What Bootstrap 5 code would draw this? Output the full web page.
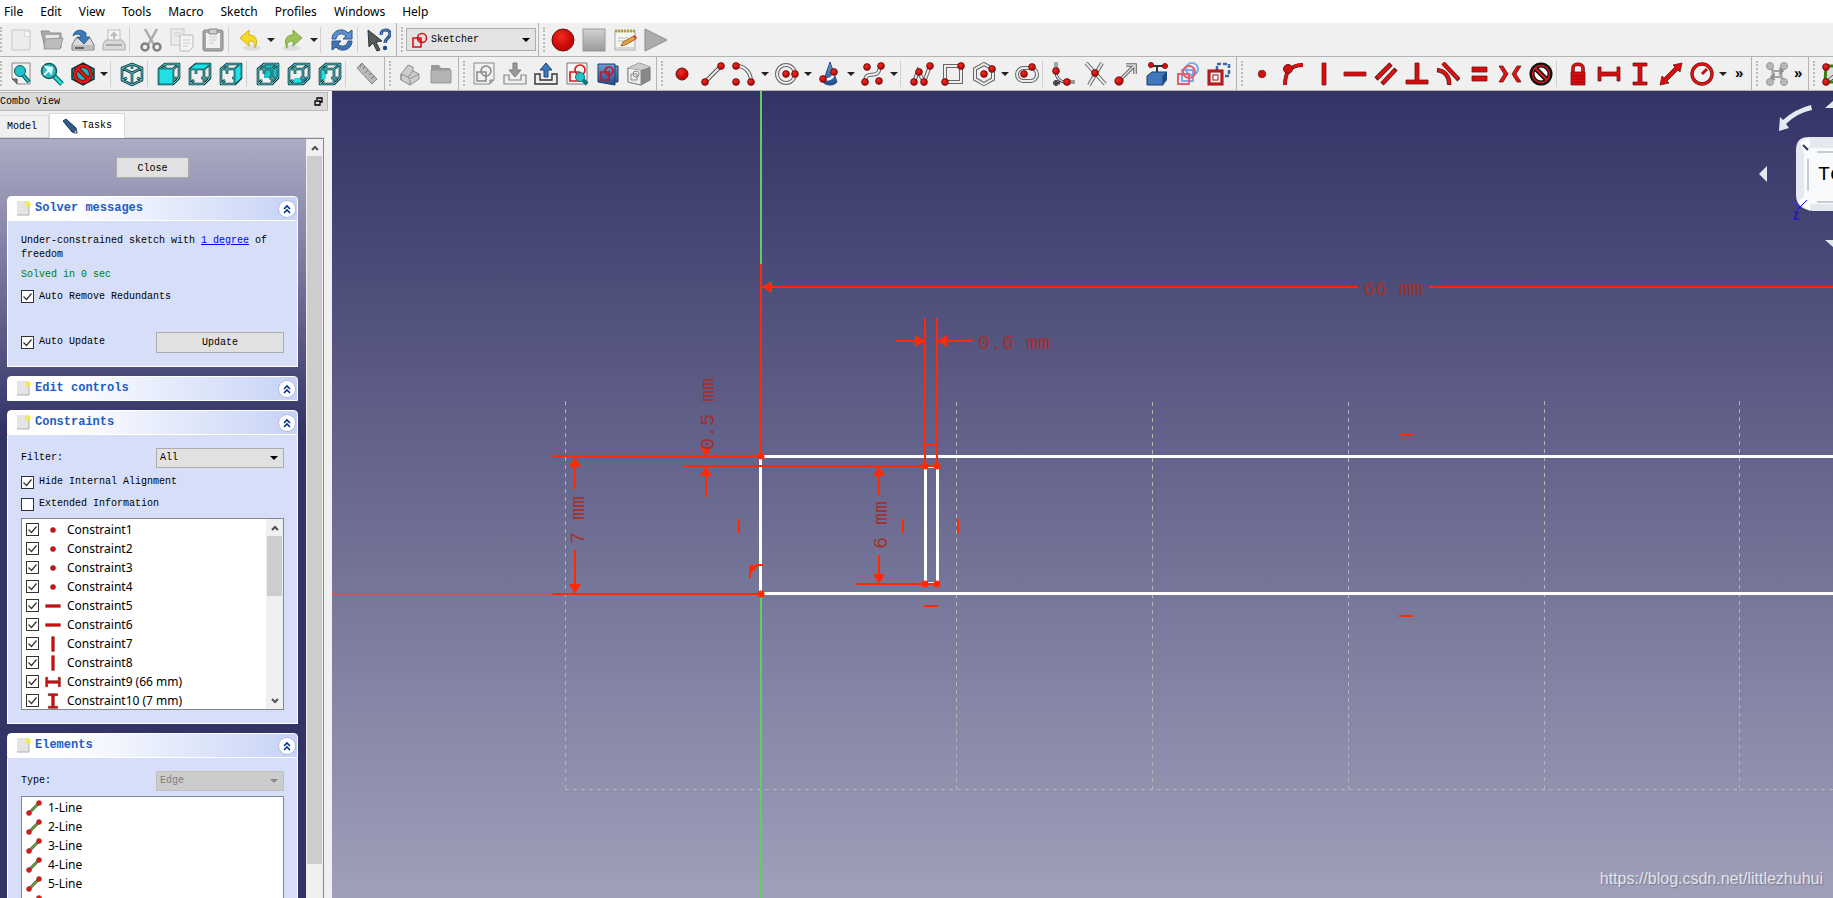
<!DOCTYPE html>
<html lang="en">
<head>
<meta charset="utf-8">
<meta name="viewport" content="width=device-width, initial-scale=1">
<title>Sketcher</title>
<link rel="stylesheet" href="https://cdn.jsdelivr.net/npm/bootstrap@5.3.0/dist/css/bootstrap.min.css">
<script src="https://cdn.jsdelivr.net/npm/bootstrap@5.3.0/dist/js/bootstrap.bundle.min.js"></script>
<style>
:root { --mono: "Liberation Mono", monospace; --ui: "Noto Sans", sans-serif; }
body { font: 12px/19px var(--ui); color: #000; background: #f0f0f0; }
button { color: inherit; }

.menubar { background: #fff; height: 23px; padding-left: 4px; gap: 17px; }
.menubar a { color: #000; text-decoration: none; line-height: 23px; }

.toolrow { height: 34px; border-bottom: 1px solid #b4b4b4; }
.toolgroup { flex: none; border-right: 1px solid #b4b4b4; padding: 0 2px 0 9px; position: relative; }
.toolgroup:first-child { padding-left: 5px; }
.toolgroup.open { border-right: 0; }
.toolgroup::before { content: ""; position: absolute; left: 4px; top: 4px; bottom: 4px; border-left: 2px dotted #bbb; }
.toolgroup:first-child::before { left: 0; }
.tb { flex: none; width: 31px; height: 33px; padding: 0; border: 0; background: none; display: flex; align-items: center; justify-content: center; }
.tb svg { width: 24px; height: 24px; }
.arr { flex: none; width: 12px; height: 33px; padding: 0; border: 0; background: none; display: flex; align-items: center; justify-content: center; }
.arr::after { content: ""; border: 4px solid transparent; border-top-color: #222; border-bottom: 0; }
.tsep { flex: none; width: 6px; height: 26px; border-left: 1px solid #d0d0d0; }
.more { border: 0; background: none; padding: 0 0 2px 6px; width: 20px; font: bold 15px/28px "Liberation Sans", sans-serif; text-align: left; }
.more.tight { width: 14px; padding-left: 2px; }
.bench { width: 130px; height: 23px; padding-left: 5px; background: #e3e3e3; border: 1px solid #adadad; }
.bench svg { width: 16px; height: 16px; flex: none; }
.toolgroup.macro { padding-left: 8px; }

select { appearance: none; font: 10px/14px var(--mono); color: #000; border-radius: 0; padding: 0 3px; background: #e1e1e1 url("data:image/svg+xml,%3Csvg xmlns='http://www.w3.org/2000/svg' width='8' height='4'%3E%3Cpath d='M0 0h8L4 4z'/%3E%3C/svg%3E") no-repeat right 5px center; border: 1px solid #adadad; }
.bench select { border: 0; flex: 1; min-width: 0; background-color: transparent; padding-left: 3px; }
.combo { width: 128px; height: 20px; }
.combo:disabled { background-color: #ccc; background-image: url("data:image/svg+xml,%3Csvg xmlns='http://www.w3.org/2000/svg' width='8' height='4'%3E%3Cpath d='M0 0h8L4 4z' fill='%23888'/%3E%3C/svg%3E"); border-color: #bfbfbf; color: #808080; opacity: 1; }

.dock { width: 332px; flex: none; padding-right: 4px; }
.dock, .push { font: 10px/14px var(--mono); }
.docktitle { height: 19px; margin-top: 1px; background: #dadada; border: 1px solid #b9b9b9; border-left: 0; padding-right: 4px; }
.docktitle button, .up, .down { border: 0; background: none; padding: 0; display: flex; }
.tabs { height: 27px; padding-top: 2px; border-bottom: 1px solid #d9d9d9; margin-right: 3px; }
.tabs button { border: 1px solid #d9d9d9; border-bottom: 0; background: #f0f0f0; font: 10px/14px var(--mono); }
.tabs .idle { width: 49px; height: 22px; border-left: 0; padding: 0 0 0 7px; text-align: left; }
.tabs .live { width: 76px; height: 25px; background: #fff; margin-bottom: -1px; padding: 0; gap: 4px; display: flex; align-items: center; justify-content: center; }
.taskframe { border: 1px solid #828790; border-left: 0; border-bottom: 0; margin-right: 4px; }
.tasks { width: 306px; padding: 18px 8px 0 7px; background: linear-gradient(#acacc4, #8a88ab 90px, #333366 290px); }
.push { background: #e1e1e1; border: 1px solid #adadad; height: 21px; padding: 2px 0 0; }
.closebtn { width: 73px; margin: 0 auto 18px; display: block; }

.vbar { width: 17px; background: #f0f0f0; flex: none; }
.vbar .up, .vbar .down { height: 17px; flex: none; width: 100%; align-items: center; justify-content: center; }
.vbar .thumb { background: #cdcdcd; margin: 0 1px; }
.vbar .long { height: 708px; }
.vbar .short { height: 60px; }

.group { margin-bottom: 9px; }
.group header { height: 25px; background: linear-gradient(90deg, #fff 20%, #c6d3f7); border: 1px solid #fff; border-radius: 4px 4px 0 0; padding: 0 2px 0 9px; }
.group h2 { font: bold 12px/23px var(--mono); color: #215dc6; margin: 0; flex: 1; padding-left: 4px; }
.fold { width: 16px; height: 16px; border: 0; padding: 0; border-radius: 50%; background: #fff; box-shadow: 0 0 0 1px #b3bcd8; display: flex; align-items: center; justify-content: center; }
.panelbody { background: #d6dff7; border: 1px solid #fff; border-top: 0; padding: 13px; }
.panelbody a { color: #00f; }
.solved { color: #008000; padding: 6px 0 8px; }
.spaced { margin-bottom: 19px; }
.filter { margin-bottom: 3px; }
.kind { margin-bottom: 5px; }
.tick { appearance: none; flex: none; width: 13px; height: 13px; border: 1px solid #333; background: #fff; margin: 0; }
.tick:checked { background: #fff url("data:image/svg+xml,%3Csvg xmlns='http://www.w3.org/2000/svg' width='11' height='11'%3E%3Cpath d='M1.500 5.500l3 3 5-6' fill='none' stroke='%23333' stroke-width='1.200'/%3E%3C/svg%3E") center no-repeat; }
.check { gap: 5px; height: 22px; }
.listbox { background: #fff; border: 1px solid #828790; font: 12px/19px var(--ui); height: 192px; }
.listbox ul { list-style: none; margin: 0; padding: 1px 0 0 4px; flex: 1; overflow: hidden; }
.listbox li { height: 19px; display: flex; align-items: center; gap: 6px; }
.listbox li svg { width: 16px; height: 16px; flex: none; }
.listbox label { display: flex; align-items: center; gap: 6px; }
.constraints { margin-top: 3px; }

.view3d { background: linear-gradient(#333366, #a0a0ba); min-width: 0; }
.sheet { width: 100%; height: 100%; display: block; }
.dim { font: 20px "Liberation Mono", monospace; fill: #a3302c; }
.cube { position: absolute; right: 0; top: 0; width: 100px; height: 170px; }
.cube text { font: 20px "Liberation Mono", monospace; }
.credit { position: absolute; right: 10px; bottom: 8px; font: 16px/22px "Liberation Sans", sans-serif; color: #e4e4ec; text-decoration: none; text-shadow: 1px 1px 1px #77778f; }
</style>
</head>
<body class="vh-100 d-flex flex-column overflow-hidden">

<svg width="0" height="0" class="position-absolute">
<defs>
<radialGradient id="rg" cx=".4" cy=".35"><stop offset="0" stop-color="#f52a22"/><stop offset="1" stop-color="#c40808"/></radialGradient>
<linearGradient id="gg" x2="0" y2="1"><stop offset="0" stop-color="#d2d2d2"/><stop offset="1" stop-color="#9a9a9a"/></linearGradient>
<linearGradient id="bg" x2="0" y2="1"><stop offset="0" stop-color="#729fcf"/><stop offset="1" stop-color="#204a87"/></linearGradient>
<circle id="dot" r="3.400" fill="url(#rg)" stroke="#5b1616" stroke-width=".8"/>
<g id="frame" fill="none" stroke="#06343a" stroke-width="2.600" stroke-linejoin="round"><path d="M2 7h14v15H2zM2 7l6-5h14v14l-6 6M16 7l6-5M8 2v10M2 22l4-4M13 16h9"/></g>
<g id="frame2" fill="none" stroke="#5fc9cd" stroke-width="1" stroke-linejoin="round"><path d="M2 7h14v15H2zM2 7l6-5h14v14l-6 6M16 7l6-5M8 2v10M2 22l4-4M13 16h9"/></g>
<symbol id="new" viewBox="0 0 24 24"><rect x="3" y="2" width="18" height="20" rx="1" fill="#ececec" stroke="#c6c6c6"/><circle cx="18" cy="6" r="3" fill="#f8f8f8" stroke="#d4d4d4"/></symbol>
<symbol id="open" viewBox="0 0 24 24"><path d="M1 3h8l2 2h10v15H5z" fill="#aaa" stroke="#8e8e8e"/><path d="M6 7h13v6H5z" fill="#e8e8e8"/><path d="M5 11l18-1-3 11H4z" fill="#bcbcbc" stroke="#999"/></symbol>
<symbol id="save" viewBox="0 0 24 24"><path d="M5 10h14l4 7v5H1v-5z" fill="#dcdcdc" stroke="#777"/><path d="M2 17h20v5H2z" fill="#bdbdbd"/><path d="M4 20h9" stroke="#666" stroke-width="2"/><path d="M2 8c1-6 8-8 13-3v4h4l-6 7-7-7h4c0-3-5-4-8-1z" fill="#4079b8" stroke="#22528c" stroke-width=".8"/></symbol>
<symbol id="print" viewBox="0 0 24 24"><path d="M6 2h12v11H6z" fill="#f7f7f7" stroke="#bbb"/><path d="M12 11V5m-3 3l3-3 3 3" fill="none" stroke="#bbb" stroke-width="2"/><path d="M4 12h16l3 4v6H1v-6z" fill="#d9d9d9" stroke="#aaa"/><path d="M4 17h16" stroke="#aaa" stroke-width="2"/></symbol>
<symbol id="cut" viewBox="0 0 24 24"><path d="M6 1l9 16M18 1L9 17" stroke="#aaa" stroke-width="2.500"/><circle cx="6" cy="19" r="3.500" fill="none" stroke="#808080" stroke-width="2.500"/><circle cx="18" cy="19" r="3.500" fill="none" stroke="#808080" stroke-width="2.500"/></symbol>
<symbol id="copy" viewBox="0 0 24 24"><path d="M1 1h13v16H1z" fill="#ececec" stroke="#c4c4c4"/><path d="M4 5h7M4 8h7" stroke="#ccc"/><path d="M10 7h13v12l-4 4h-9z" fill="#f4f4f4" stroke="#bbb"/><path d="M13 12h7M13 15h7M13 18h5" stroke="#ccc"/></symbol>
<symbol id="paste" viewBox="0 0 24 24"><rect x="2" y="2" width="20" height="21" rx="2" fill="#a5a5a5" stroke="#888"/><path d="M5 5h14v15H5z" fill="#f2f2f2"/><path d="M8 1h8v5H8z" fill="#ccc" stroke="#888"/><path d="M8 9h8M8 12h8M8 15h5" stroke="#ccc"/></symbol>
<symbol id="undo" viewBox="0 0 24 24"><ellipse cx="14" cy="20" rx="9" ry="3" fill="#ddd"/><path d="M11 2v5c8 0 9 7 6 13 0-5-1-7-6-7v5L2 10z" fill="#f6d92e" stroke="#c9a40b" stroke-width=".8"/></symbol>
<symbol id="redo" viewBox="0 0 24 24"><ellipse cx="10" cy="20" rx="9" ry="3" fill="#ddd"/><path d="M12 2v5C4 7 3 14 6 20c0-5 1-7 6-7v5l9-8z" fill="#9bc455" stroke="#6f9a30" stroke-width=".8"/></symbol>
<symbol id="sync" viewBox="0 0 24 24"><path d="M2 11C2 2 13-1 18 5l4-3v9h-9l3-3C12 4 7 6 6 11z" fill="#5c8fcc" stroke="#29558f"/><path d="M22 13c0 9-11 12-16 6l-4 3v-9h9l-3 3c4 4 9 2 10-3z" fill="#3f74b4" stroke="#29558f"/></symbol>
<symbol id="help" viewBox="0 0 24 24"><path d="M1 2l14 11-6 1 4 8-3 1-4-8-4 4z" fill="#565b58" stroke="#2e3436"/><path d="M14 7c0-7 9-6 9-1 0 4-5 4-5 9" fill="none" stroke="#1f4a86" stroke-width="3.200"/><path d="M14 7c0-7 9-6 9-1 0 4-5 4-5 9" fill="none" stroke="#6c9bd2" stroke-width="1"/><circle cx="18" cy="20" r="2.200" fill="#204a87"/></symbol>
<symbol id="sk" viewBox="0 0 16 16"><g fill="none" stroke="#d4141a" stroke-width="1.600"><path d="M1 6h8v9H1z"/><circle cx="10" cy="6" r="4.500"/><path d="M6 6l4 4" /></g></symbol>
<symbol id="rec" viewBox="0 0 24 24"><circle cx="12" cy="12" r="11" fill="url(#rg)" stroke="#6b1010"/></symbol>
<symbol id="stop" viewBox="0 0 24 24"><rect x="1" y="1" width="22" height="22" fill="url(#gg)" stroke="#999"/></symbol>
<symbol id="note" viewBox="0 0 24 24"><rect x="2" y="3" width="20" height="19" fill="#f4f4f0" stroke="#aaa"/><path d="M2 3h20" stroke="#b5a040" stroke-width="3" stroke-dasharray="2 1"/><path d="M5 10h10M5 13h8M2 20h20" stroke="#bbb"/><path d="M8 18l2-4 11-6 2 3-11 6z" fill="#eaa43c" stroke="#80561a" stroke-width=".8"/><path d="M20 8l2-1 2 3-2 1z" fill="#d33"/></symbol>
<symbol id="play" viewBox="0 0 24 24"><path d="M1 1l22 11L1 23z" fill="#adadad" stroke="#8e8e8e"/></symbol>
<symbol id="fit" viewBox="0 0 24 24"><path d="M3 1h18v21H8l-5-5z" fill="#f1f1f1" stroke="#888"/><path d="M3 17h5v5" fill="#777" stroke="#555"/><path d="M14 13l6 7" stroke="#06343a" stroke-width="4"/><path d="M14 13l6 7" stroke="#1cc" stroke-width="2"/><circle cx="11" cy="9" r="5.500" fill="#22c4c8" stroke="#0b5d62"/></symbol>
<symbol id="zoomi" viewBox="0 0 24 24"><path d="M13 13l9 9" stroke="#06545a" stroke-width="5"/><path d="M13 13l9 9" stroke="#2dd" stroke-width="3"/><circle cx="9" cy="9" r="7.500" fill="#35b9bd" stroke="#0b5d62" stroke-width="1.500"/><path d="M4 13l5-5M6 5l6 1-1 5z" stroke="#dff" stroke-width="2" fill="#dff"/></symbol>
<symbol id="style" viewBox="0 0 24 24"><path d="M1 7l11-6 11 6v10l-11 6-11-6z" fill="#1db5b9" stroke="#06343a" stroke-width="1.500"/><circle cx="12" cy="12" r="8" fill="none" stroke="#6b0505" stroke-width="4"/><path d="M6 6l12 12" stroke="#6b0505" stroke-width="4"/><circle cx="12" cy="12" r="8" fill="none" stroke="#e01818" stroke-width="2.400"/><path d="M6 6l12 12" stroke="#e01818" stroke-width="2.400"/></symbol>
<symbol id="iso" viewBox="0 0 24 24"><g fill="none" stroke-linejoin="round"><path d="M2 6l10-4 10 4v12l-10 5-10-5zM2 6l10 5 10-5M12 11v12M12 2v5M2 18l5-2M22 18l-5-2" stroke="#06343a" stroke-width="2.600"/><path d="M2 6l10-4 10 4v12l-10 5-10-5zM2 6l10 5 10-5M12 11v12M12 2v5M2 18l5-2M22 18l-5-2" stroke="#5fc9cd" stroke-width="1"/></g></symbol>
<symbol id="vfront" viewBox="0 0 24 24"><use href="#frame"/><use href="#frame2"/><path d="M2 7h14v15H2z" fill="#20e0e6" stroke="#0a7a80"/></symbol>
<symbol id="vtop" viewBox="0 0 24 24"><use href="#frame"/><use href="#frame2"/><path d="M2 7l6-5h14l-6 5z" fill="#20e0e6" stroke="#0a7a80"/></symbol>
<symbol id="vright" viewBox="0 0 24 24"><use href="#frame"/><use href="#frame2"/><path d="M16 7l6-5v14l-6 6z" fill="#20e0e6" stroke="#0a7a80"/></symbol>
<symbol id="vrear" viewBox="0 0 24 24"><path d="M8 2h14v14H8z" fill="#19c3c9"/><use href="#frame"/><use href="#frame2"/></symbol>
<symbol id="vbottom" viewBox="0 0 24 24"><path d="M2 22l6-6h14l-6 6z" fill="#20e0e6"/><use href="#frame"/><use href="#frame2"/></symbol>
<symbol id="vleft" viewBox="0 0 24 24"><path d="M2 7l6-5v14l-6 6z" fill="#20e0e6"/><use href="#frame"/><use href="#frame2"/></symbol>
<symbol id="ruler" viewBox="0 0 24 24"><path d="M2 6l5-5 15 16-5 5z" fill="#b9b9b9" stroke="#888"/><path d="M7 1l-2 4M10 4l-2 3M13 8l-3 3M16 11l-2 2M19 14l-3 3" stroke="#777"/></symbol>
<symbol id="part" viewBox="0 0 24 24"><path d="M3 12l7-9 5 2v4l6 3v5l-9 6-9-5z" fill="#ccc" stroke="#8e8e8e" stroke-linejoin="round"/><path d="M3 12l7 3 5-6M10 15l1 2 10-5M12 23v-5M3 12v6" fill="none" stroke="#8e8e8e"/></symbol>
<symbol id="folder" viewBox="0 0 24 24"><path d="M2 3h8l2 3h9v3H2z" fill="#999"/><path d="M2 8h20v13H2z" fill="#b4b4b4" stroke="#999"/></symbol>
<symbol id="sknew" viewBox="0 0 24 24"><path d="M2 1h20v17l-4 4H2z" fill="#f1f1f1" stroke="#888"/><g fill="none" stroke="#888" stroke-width="1.500"><path d="M5 10h9v9H5z"/><circle cx="14" cy="9" r="5"/></g><path d="M18 22v-4h4" fill="#aaa" stroke="#888"/></symbol>
<symbol id="leave" viewBox="0 0 24 24"><path d="M1 13h5v5h12v-5h5v9H1z" fill="#eee" stroke="#888" stroke-width="1.200"/><path d="M10 1h4v7h4l-6 7-6-7h4z" fill="#999" stroke="#7c7c7c"/></symbol>
<symbol id="exp" viewBox="0 0 24 24"><path d="M1 12h5v6h12v-6h5v10H1z" fill="#eee" stroke="#333" stroke-width="1.400"/><path d="M10 15h4V8h4l-6-7-6 7h4z" fill="#3f78bb" stroke="#1c4378"/></symbol>
<symbol id="vsk" viewBox="0 0 24 24"><path d="M2 1h20v21H2z" fill="#f6f6f6" stroke="#777"/><g fill="none" stroke="#e01b1b" stroke-width="1.700"><path d="M5 10h9v9H5z"/><circle cx="15" cy="8" r="5"/></g><path d="M17 17l5 5" stroke="#0b777c" stroke-width="4"/><circle cx="15" cy="15" r="4.500" fill="#25c3c7" stroke="#0b777c"/></symbol>
<symbol id="vsec" viewBox="0 0 24 24"><path d="M2 2h17v2h3v16h-3v3L2 20z" fill="url(#bg)" stroke="#1c3c6a"/><path d="M19 4v16" stroke="#1c3c6a"/><g fill="none" stroke="#c01530" stroke-width="1.700"><path d="M5 10h8v8H5z"/><circle cx="13" cy="9" r="4"/></g></symbol>
<symbol id="mapsk" viewBox="0 0 24 24"><path d="M1 6l11-5 11 4v13l-9 5-13-3z" fill="#888" stroke="#777"/><path d="M1 6l13 2v15L1 20z" fill="#eee" stroke="#888"/><path d="M1 6l11-5 11 4-9 3z" fill="#ccc"/><path d="M4 12h6v6H4z" fill="none" stroke="#888"/><circle cx="9" cy="12" r="3" fill="none" stroke="#888"/></symbol>
<symbol id="pt" viewBox="0 0 24 24"><circle cx="12" cy="12" r="6" fill="url(#rg)" stroke="#5b1616"/></symbol>
<symbol id="line" viewBox="0 0 24 24"><path d="M4 20L20 4" stroke="#555" stroke-width="4"/><path d="M4 20L20 4" stroke="#eee" stroke-width="2"/><use href="#dot" x="4" y="20"/><use href="#dot" x="20" y="4"/></symbol>
<symbol id="arc" viewBox="0 0 24 24"><path d="M5 4c9 0 14 8 14 15" stroke="#666" stroke-width="4" fill="none"/><path d="M5 4c9 0 14 8 14 15" stroke="#eee" stroke-width="2" fill="none"/><use href="#dot" x="4" y="4"/><use href="#dot" x="4" y="20"/><use href="#dot" x="19" y="20"/></symbol>
<symbol id="circ" viewBox="0 0 24 24"><circle cx="11" cy="12" r="9" fill="none" stroke="#666" stroke-width="4"/><circle cx="11" cy="12" r="9" fill="none" stroke="#eee" stroke-width="2"/><use href="#dot" x="11" y="12"/><use href="#dot" x="20" y="12"/></symbol>
<symbol id="cone" viewBox="0 0 24 24"><path d="M12 0l7 20c-3 4-11 4-14 0z" fill="url(#bg)" stroke="#204a87"/><path d="M6 17c4 1 9 0 10-6" stroke="#fff" stroke-width="2.500" fill="none"/><use href="#dot" x="5" y="17"/><use href="#dot" x="16" y="10"/></symbol>
<symbol id="bsp" viewBox="0 0 24 24"><path d="M4 20c0-14 14 0 15-16" stroke="#666" stroke-width="4" fill="none"/><path d="M4 20c0-14 14 0 15-16" stroke="#eee" stroke-width="2" fill="none"/><use href="#dot" x="6" y="5"/><use href="#dot" x="20" y="4"/><use href="#dot" x="4" y="20"/><use href="#dot" x="18" y="19"/></symbol>
<symbol id="poly" viewBox="0 0 24 24"><path d="M4 20L8 9l6 11 6-16" stroke="#666" stroke-width="4" fill="none"/><path d="M4 20L8 9l6 11 6-16" stroke="#eee" stroke-width="2" fill="none"/><use href="#dot" x="4" y="20"/><use href="#dot" x="9" y="10"/><use href="#dot" x="14" y="20"/><use href="#dot" x="20" y="4"/></symbol>
<symbol id="rect" viewBox="0 0 24 24"><path d="M4 4h16v16H4z" stroke="#666" stroke-width="4" fill="none"/><path d="M4 4h16v16H4z" stroke="#eee" stroke-width="2" fill="none"/><use href="#dot" x="4" y="20"/><use href="#dot" x="20" y="4"/></symbol>
<symbol id="hexa" viewBox="0 0 24 24"><path d="M12 2l9 5v10l-9 5-9-5V7z" stroke="#666" stroke-width="4" fill="none"/><path d="M12 2l9 5v10l-9 5-9-5V7z" stroke="#eee" stroke-width="2" fill="none"/><use href="#dot" x="12" y="12"/><use href="#dot" x="20" y="7"/></symbol>
<symbol id="slot" viewBox="0 0 24 24"><rect x="2" y="6" width="20" height="13" rx="6.500" stroke="#666" stroke-width="4" fill="none"/><rect x="2" y="6" width="20" height="13" rx="6.500" stroke="#eee" stroke-width="2" fill="none"/><use href="#dot" x="9" y="12"/><use href="#dot" x="17" y="5"/></symbol>
<symbol id="fillet" viewBox="0 0 24 24"><path d="M4 0v9c0 7 4 11 10 11h9M1 21h7M4 18v6" stroke="#444" stroke-width="3" fill="none"/><path d="M4 0v9c0 7 4 11 10 11h9" stroke="#eee" stroke-width="1.200" fill="none"/><use href="#dot" x="4" y="9"/><use href="#dot" x="15" y="20"/></symbol>
<symbol id="trim" viewBox="0 0 24 24"><path d="M19 1L6 23M3 1l19 21" stroke="#666" stroke-width="4"/><path d="M19 1L6 23M3 1l19 21" stroke="#eee" stroke-width="2"/><use href="#dot" x="12" y="11"/></symbol>
<symbol id="extend" viewBox="0 0 24 24"><path d="M4 20L20 4M12 3h9v9" stroke="#666" stroke-width="3.600" fill="none"/><path d="M4 20L20 4M12 3h9v9" stroke="#ddd" stroke-width="1.600" fill="none"/><circle cx="5" cy="19" r="4.200" fill="url(#rg)" stroke="#5b1616" stroke-width=".8"/></symbol>
<symbol id="ext" viewBox="0 0 24 24"><path d="M5 4h15M12 4v9" stroke="#333" stroke-width="2"/><path d="M2 14l5-4h15l-4 4v9H2z" fill="#3f78bb" stroke="#1c3c6a"/><path d="M18 14l4-4v8l-4 5z" fill="#204a87"/><circle cx="6" cy="3" r="2.600" fill="#d80c0c" stroke="#5b1616" stroke-width=".8"/><circle cx="20" cy="4" r="2.600" fill="#d80c0c" stroke="#5b1616" stroke-width=".8"/></symbol>
<symbol id="carbon" viewBox="0 0 24 24"><g fill="none" stroke="#7ca7f0" stroke-width="2"><path d="M6 8h11v11H6z"/><circle cx="16" cy="7" r="6"/></g><g fill="none" stroke="#e2606a" stroke-width="2"><path d="M2 12h11v10H2z"/><circle cx="13" cy="10" r="6"/></g></symbol>
<symbol id="constr" viewBox="0 0 24 24"><path d="M10 2h12v12H10z" stroke="#3a68a8" stroke-width="2.500" fill="none" stroke-dasharray="4 2"/><rect x="2" y="9" width="13" height="13" fill="#f6eaea" stroke="#8e0c0c" stroke-width="3"/><rect x="2" y="9" width="13" height="13" fill="none" stroke="#e22" stroke-width="1"/><rect x="6" y="13" width="5" height="5" fill="#fff" stroke="#a11"/></symbol>
<symbol id="c-pt" viewBox="0 0 24 24"><circle cx="12" cy="12" r="3.800" fill="#d80c0c" stroke="#6b3030" stroke-width=".8"/></symbol>
<symbol id="c-on" viewBox="0 0 24 24"><path d="M4 23c0-12 4-20 18-20" stroke="#6b1616" stroke-width="4" fill="none"/><path d="M4 23c0-12 4-20 18-20" stroke="#e01212" stroke-width="2.600" fill="none"/><circle cx="7" cy="7" r="4.500" fill="#d80c0c" stroke="#6b1616"/></symbol>
<symbol id="c-v" viewBox="0 0 24 24"><path d="M10 1h4v22h-4z" fill="#d80c0c" stroke="#7a2020" stroke-width=".8"/></symbol>
<symbol id="c-h" viewBox="0 0 24 24"><path d="M1 10h22v4H1z" fill="#d80c0c" stroke="#7a2020" stroke-width=".8"/></symbol>
<symbol id="c-par" viewBox="0 0 24 24"><path d="M2 17L17 2M8 22L22 7" stroke="#6b1616" stroke-width="4.600"/><path d="M3 16L16 3M9 21L21 8" stroke="#e01212" stroke-width="3"/></symbol>
<symbol id="c-perp" viewBox="0 0 24 24"><path d="M10 1h4v17h9v4H1v-4h9z" fill="#d80c0c" stroke="#6b1616" stroke-width=".8"/></symbol>
<symbol id="c-tan" viewBox="0 0 24 24"><path d="M7 1l16 17M1 8c8 1 13 7 12 15" stroke="#6b1616" stroke-width="4.400" fill="none"/><path d="M7 1l15 16M2 8c7 1 12 7 11 14" stroke="#e01212" stroke-width="2.800" fill="none"/></symbol>
<symbol id="c-eq" viewBox="0 0 24 24"><path d="M5 5h15v5H5zM5 14h15v5H5z" fill="#d80c0c" stroke="#6b1616" stroke-width=".8"/></symbol>
<symbol id="c-sym" viewBox="0 0 24 24"><path d="M1 4h4l5 8-5 8H1l5-8zM23 4h-4l-5 8 5 8h4l-5-8z" fill="#e01212" stroke="#6b1616" stroke-width=".8"/></symbol>
<symbol id="c-blk" viewBox="0 0 24 24"><circle cx="12" cy="12" r="9" fill="#fff" stroke="#111" stroke-width="5"/><path d="M6 6l12 12" stroke="#111" stroke-width="5"/><circle cx="12" cy="12" r="8.500" fill="none" stroke="#d81818" stroke-width="1.500"/><path d="M6 6l12 12" stroke="#d81818" stroke-width="2"/></symbol>
<symbol id="c-lock" viewBox="0 0 24 24"><path d="M7 11V6c0-5 10-5 10 0v5" fill="none" stroke="#6b1616" stroke-width="3.600"/><path d="M7 11V6c0-5 10-5 10 0v5" fill="none" stroke="#e01212" stroke-width="2"/><path d="M5 10h14v13H5z" fill="#d80c0c" stroke="#6b1616" stroke-width=".8"/><path d="M6 14h12M6 17h12M6 20h12" stroke="#a00808"/></symbol>
<symbol id="c-hd" viewBox="0 0 24 24"><path d="M1 5h3v5h16V5h3v14h-3v-5H4v5H1z" fill="#d80c0c" stroke="#6b1616" stroke-width=".8"/></symbol>
<symbol id="c-vd" viewBox="0 0 24 24"><path d="M5 1h14v3h-5v16h5v3H5v-3h5V4H5z" fill="#d80c0c" stroke="#6b1616" stroke-width=".8"/></symbol>
<symbol id="c-dist" viewBox="0 0 24 24"><path d="M23 1l-2 9-2-2L8 19l2 2-9 2 2-9 2 2L16 5l-2-2z" fill="#d80c0c" stroke="#6b1616" stroke-width=".8"/></symbol>
<symbol id="c-rad" viewBox="0 0 24 24"><circle cx="12" cy="12" r="10" fill="none" stroke="#6b1616" stroke-width="3.400"/><circle cx="12" cy="12" r="10" fill="none" stroke="#e01212" stroke-width="2"/><path d="M12 12l5-5" stroke="#c01212" stroke-width="3"/></symbol>
<symbol id="sw" viewBox="0 0 24 24"><path d="M5 4c4 5 4 11 0 16M19 4c-4 5-4 11 0 16" stroke="#aaa" stroke-width="3" fill="none"/><path d="M9 9h7M8 15h7M14 6l4 3-4 3M10 12l-4 3 4 3" stroke="#888" stroke-width="1.500" fill="none"/><g fill="#b8b8b8" stroke="#999"><circle cx="5" cy="4" r="3.500"/><circle cx="19" cy="4" r="3.500"/><circle cx="5" cy="20" r="3.500"/><circle cx="19" cy="20" r="3.500"/></g></symbol>
<symbol id="srf" viewBox="0 0 24 24"><path d="M4 4h18v16H3z" fill="#ddd" stroke="#3a7d10" stroke-width="3"/><path d="M5 18L20 6M7 20l14-10" stroke="#555"/><use href="#dot" x="4" y="5"/><use href="#dot" x="4" y="20"/></symbol>
<symbol id="seg" viewBox="0 0 16 16"><path d="M3 13L13 3" stroke="#333" stroke-width="2.600"/><path d="M3 13L13 3" stroke="#6fbf2c" stroke-width="1.400"/><circle cx="3" cy="13" r="2.500" fill="#e01515" stroke="#844" stroke-width=".6"/><circle cx="13" cy="3" r="2.500" fill="#e01515" stroke="#844" stroke-width=".6"/></symbol>
<symbol id="page" viewBox="0 0 14 15"><path d="M0 0h12v14H0z" fill="#e4e4e4"/><path d="M0 14h12V2" fill="none" stroke="#b0b0b0"/><circle cx="11" cy="3" r="2.800" fill="#f6ee35" fill-opacity=".8"/></symbol>
<symbol id="chev" viewBox="0 0 10 10"><path d="M2 5l3-3 3 3M2 9l3-3 3 3" fill="none" stroke="#00309c" stroke-width="1.600"/></symbol>
<symbol id="cup" viewBox="0 0 8 6"><path d="M1 5l3-3 3 3" fill="none" stroke="#505050" stroke-width="2"/></symbol>
<symbol id="cdn" viewBox="0 0 8 6"><path d="M1 1l3 3 3-3" fill="none" stroke="#505050" stroke-width="2"/></symbol>
</defs>
</svg>

<nav class="menubar d-flex flex-shrink-0" aria-label="Menu">
<a href="#">File</a><a href="#">Edit</a><a href="#">View</a><a href="#">Tools</a><a href="#">Macro</a><a href="#">Sketch</a><a href="#">Profiles</a><a href="#">Windows</a><a href="#">Help</a>
</nav>

<div class="toolrow d-flex flex-shrink-0 overflow-hidden">
  <div class="toolgroup d-flex align-items-center">
    <button class="tb"><svg><use href="#new"/></svg></button><button class="tb"><svg><use href="#open"/></svg></button><button class="tb"><svg><use href="#save"/></svg></button><button class="tb"><svg><use href="#print"/></svg></button><span class="tsep"></span>
    <button class="tb"><svg><use href="#cut"/></svg></button><button class="tb"><svg><use href="#copy"/></svg></button><button class="tb"><svg><use href="#paste"/></svg></button><span class="tsep"></span>
    <button class="tb"><svg><use href="#undo"/></svg></button><button class="arr"></button><button class="tb"><svg><use href="#redo"/></svg></button><button class="arr"></button><span class="tsep"></span>
    <button class="tb"><svg><use href="#sync"/></svg></button><span class="tsep"></span><button class="tb"><svg><use href="#help"/></svg></button>
  </div>
  <div class="toolgroup d-flex align-items-center">
    <div class="bench d-flex align-items-center"><svg><use href="#sk"/></svg><select aria-label="Workbench"><option>Sketcher</option></select></div>
  </div>
  <div class="toolgroup open macro d-flex align-items-center">
    <button class="tb"><svg><use href="#rec"/></svg></button><button class="tb"><svg><use href="#stop"/></svg></button><button class="tb"><svg><use href="#note"/></svg></button><button class="tb"><svg><use href="#play"/></svg></button>
  </div>
</div>

<div class="toolrow d-flex flex-shrink-0 overflow-hidden">
  <div class="toolgroup d-flex align-items-center">
    <button class="tb"><svg><use href="#fit"/></svg></button><button class="tb"><svg><use href="#zoomi"/></svg></button><button class="tb"><svg><use href="#style"/></svg></button><button class="arr"></button><span class="tsep"></span>
    <button class="tb"><svg><use href="#iso"/></svg></button><span class="tsep"></span>
    <button class="tb"><svg><use href="#vfront"/></svg></button><button class="tb"><svg><use href="#vtop"/></svg></button><button class="tb"><svg><use href="#vright"/></svg></button><span class="tsep"></span>
    <button class="tb"><svg><use href="#vrear"/></svg></button><button class="tb"><svg><use href="#vbottom"/></svg></button><button class="tb"><svg><use href="#vleft"/></svg></button><span class="tsep"></span>
    <button class="tb"><svg><use href="#ruler"/></svg></button>
  </div>
  <div class="toolgroup d-flex align-items-center">
    <button class="tb"><svg><use href="#part"/></svg></button><button class="tb"><svg><use href="#folder"/></svg></button>
  </div>
  <div class="toolgroup d-flex align-items-center">
    <button class="tb"><svg><use href="#sknew"/></svg></button><button class="tb"><svg><use href="#leave"/></svg></button><button class="tb"><svg><use href="#exp"/></svg></button><button class="tb"><svg><use href="#vsk"/></svg></button><button class="tb"><svg><use href="#vsec"/></svg></button><button class="tb"><svg><use href="#mapsk"/></svg></button>
  </div>
  <div class="toolgroup d-flex align-items-center">
    <button class="tb"><svg><use href="#pt"/></svg></button><button class="tb"><svg><use href="#line"/></svg></button><button class="tb"><svg><use href="#arc"/></svg></button><button class="arr"></button><button class="tb"><svg><use href="#circ"/></svg></button><button class="arr"></button><button class="tb"><svg><use href="#cone"/></svg></button><button class="arr"></button><button class="tb"><svg><use href="#bsp"/></svg></button><button class="arr"></button><span class="tsep"></span>
    <button class="tb"><svg><use href="#poly"/></svg></button><button class="tb"><svg><use href="#rect"/></svg></button><button class="tb"><svg><use href="#hexa"/></svg></button><button class="arr"></button><button class="tb"><svg><use href="#slot"/></svg></button><span class="tsep"></span>
    <button class="tb"><svg><use href="#fillet"/></svg></button><button class="tb"><svg><use href="#trim"/></svg></button><button class="tb"><svg><use href="#extend"/></svg></button><button class="tb"><svg><use href="#ext"/></svg></button><button class="tb"><svg><use href="#carbon"/></svg></button><button class="tb"><svg><use href="#constr"/></svg></button>
  </div>
  <div class="toolgroup d-flex align-items-center">
    <button class="tb"><svg><use href="#c-pt"/></svg></button><button class="tb"><svg><use href="#c-on"/></svg></button><button class="tb"><svg><use href="#c-v"/></svg></button><button class="tb"><svg><use href="#c-h"/></svg></button><button class="tb"><svg><use href="#c-par"/></svg></button><button class="tb"><svg><use href="#c-perp"/></svg></button><button class="tb"><svg><use href="#c-tan"/></svg></button><button class="tb"><svg><use href="#c-eq"/></svg></button><button class="tb"><svg><use href="#c-sym"/></svg></button><button class="tb"><svg><use href="#c-blk"/></svg></button><span class="tsep"></span>
    <button class="tb"><svg><use href="#c-lock"/></svg></button><button class="tb"><svg><use href="#c-hd"/></svg></button><button class="tb"><svg><use href="#c-vd"/></svg></button><button class="tb"><svg><use href="#c-dist"/></svg></button><button class="tb"><svg><use href="#c-rad"/></svg></button><button class="arr"></button><button class="more">»</button>
  </div>
  <div class="toolgroup d-flex align-items-center">
    <button class="tb"><svg><use href="#sw"/></svg></button><button class="more tight">»</button>
  </div>
  <div class="toolgroup open d-flex align-items-center">
    <button class="tb"><svg><use href="#srf"/></svg></button>
  </div>
</div>

<main class="d-flex flex-grow-1 overflow-hidden">
  <aside class="dock d-flex flex-column">
    <div class="docktitle d-flex align-items-center justify-content-between flex-shrink-0">
      <span>Combo View</span>
      <button aria-label="Float"><svg width="9" height="9" viewBox="0 0 9 9"><path d="M3 3V1h5v4H6M1 4h5v4H1z" fill="none" stroke="#000" stroke-width="1.300"/></svg></button>
    </div>
    <div class="tabs d-flex align-items-end flex-shrink-0">
      <button class="idle">Model</button>
      <button class="live"><svg width="16" height="16" viewBox="0 0 16 16"><path d="M1 3l3-2 10 9 1 5-5-1z" fill="#2f5c8a" stroke="#1c3450"/><path d="M12 15l3 0-1-4z" fill="#ddd" stroke="#333" stroke-width=".6"/></svg>Tasks</button>
    </div>
    <div class="taskframe d-flex flex-grow-1 overflow-hidden">
      <div class="tasks overflow-hidden">
        <button class="push closebtn">Close</button>

        <section class="group">
          <header class="d-flex align-items-center"><svg width="14" height="15"><use href="#page"/></svg><h2>Solver messages</h2><button class="fold" aria-label="Collapse"><svg width="10" height="10"><use href="#chev"/></svg></button></header>
          <div class="panelbody">
            <div><span>Under-constrained sketch with</span> <a href="#">1 degree</a> <span>of</span> <span>freedom</span></div>
            <div class="solved">Solved in 0 sec</div>
            <div class="d-flex align-items-start check spaced"><input class="tick" type="checkbox" id="rmr" checked><label for="rmr">Auto Remove Redundants</label></div>
            <div class="d-flex align-items-center justify-content-between"><span class="check d-flex align-items-center"><input class="tick" type="checkbox" id="au" checked><label for="au">Auto Update</label></span><button class="push combo">Update</button></div>
          </div>
        </section>

        <section class="group">
          <header class="d-flex align-items-center"><svg width="14" height="15"><use href="#page"/></svg><h2>Edit controls</h2><button class="fold" aria-label="Collapse"><svg width="10" height="10"><use href="#chev"/></svg></button></header>
        </section>

        <section class="group">
          <header class="d-flex align-items-center"><svg width="14" height="15"><use href="#page"/></svg><h2>Constraints</h2><button class="fold" aria-label="Collapse"><svg width="10" height="10"><use href="#chev"/></svg></button></header>
          <div class="panelbody">
            <div class="d-flex align-items-center justify-content-between filter"><label for="flt">Filter:</label><select class="combo" id="flt"><option>All</option></select></div>
            <div class="d-flex align-items-center check"><input class="tick" type="checkbox" id="hia" checked><label for="hia">Hide Internal Alignment</label></div>
            <div class="d-flex align-items-center check"><input class="tick" type="checkbox" id="exi"><label for="exi">Extended Information</label></div>
            <div class="listbox constraints d-flex">
              <ul>
                <li><label><input class="tick" type="checkbox" checked><svg><use href="#c-pt"/></svg>Constraint1</label></li>
                <li><label><input class="tick" type="checkbox" checked><svg><use href="#c-pt"/></svg>Constraint2</label></li>
                <li><label><input class="tick" type="checkbox" checked><svg><use href="#c-pt"/></svg>Constraint3</label></li>
                <li><label><input class="tick" type="checkbox" checked><svg><use href="#c-pt"/></svg>Constraint4</label></li>
                <li><label><input class="tick" type="checkbox" checked><svg><use href="#c-h"/></svg>Constraint5</label></li>
                <li><label><input class="tick" type="checkbox" checked><svg><use href="#c-h"/></svg>Constraint6</label></li>
                <li><label><input class="tick" type="checkbox" checked><svg><use href="#c-v"/></svg>Constraint7</label></li>
                <li><label><input class="tick" type="checkbox" checked><svg><use href="#c-v"/></svg>Constraint8</label></li>
                <li><label><input class="tick" type="checkbox" checked><svg><use href="#c-hd"/></svg>Constraint9 (66 mm)</label></li>
                <li><label><input class="tick" type="checkbox" checked><svg><use href="#c-vd"/></svg>Constraint10 (7 mm)</label></li>
              </ul>
              <div class="vbar d-flex flex-column"><button class="up" aria-label="Up"><svg width="8" height="6"><use href="#cup"/></svg></button><div class="thumb short"></div><button class="down mt-auto" aria-label="Down"><svg width="8" height="6"><use href="#cdn"/></svg></button></div>
            </div>
          </div>
        </section>

        <section class="group">
          <header class="d-flex align-items-center"><svg width="14" height="15"><use href="#page"/></svg><h2>Elements</h2><button class="fold" aria-label="Collapse"><svg width="10" height="10"><use href="#chev"/></svg></button></header>
          <div class="panelbody">
            <div class="d-flex align-items-center justify-content-between kind"><label for="typ">Type:</label><select class="combo" id="typ" disabled><option>Edge</option></select></div>
            <div class="listbox d-flex">
              <ul>
                <li><svg><use href="#seg"/></svg>1-Line</li>
                <li><svg><use href="#seg"/></svg>2-Line</li>
                <li><svg><use href="#seg"/></svg>3-Line</li>
                <li><svg><use href="#seg"/></svg>4-Line</li>
                <li><svg><use href="#seg"/></svg>5-Line</li>
                <li><svg><use href="#seg"/></svg></li>
              </ul>
            </div>
          </div>
        </section>
      </div>
      <div class="vbar d-flex flex-column"><button class="up" aria-label="Up"><svg width="8" height="6"><use href="#cup"/></svg></button><div class="thumb long"></div></div>
    </div>
  </aside>

  <div class="view3d flex-grow-1 position-relative overflow-hidden">
    <svg class="sheet">
      <g transform="translate(-332 -91)" fill="none">
        <!-- grid -->
        <path d="M565.500 401V789M956.500 402V789M1152.500 402V789M1348.500 402V789M1544.500 401V789M1739.500 401V789M565 789.500H4000" stroke="#b4b4b4" stroke-dasharray="4 4"/>
        <!-- axes -->
        <path d="M761 91V264M761 594V2000" stroke="#5fce66" stroke-width="2"/>
        <path d="M332 594H552" stroke="#c4575f" stroke-width="2"/>
        <!-- geometry -->
        <path d="M4000 456.500H760.500V593.500H4000M925.500 466.500H937.500V583.500H925.500z" stroke="#fff" stroke-width="3"/>
        <!-- dimensions and constraint marks -->
        <g stroke="#ff2a04" stroke-width="2">
          <path d="M761 264V456M762 287H1357M1429 287H4000M925 318V466M937 318V466M925 445H937M895 341H925M937 341H973"/>
          <path d="M552 456H760M552 594H760M575 457V489M575 550V593M683 466H937M706 466V497M879 466V495M879 555V583M856 584H937"/>
          <path d="M739 519V533M903 519V533M958 519V533M924 606H938M1399 435H1413M1399 616H1413M756 565H763"/>
        </g>
        <g fill="#ff2a04">
          <path d="M762 287l10-6v12zM925 341l-10-6v12zM937 341l10-6v12zM575 457l-6 10h12zM575 594l-6-10h12zM706 456l-6-9h12zM706 466l-6 10h12zM879 466l-6 10h12zM879 584l-6-10h12zM750 565h8l-3 5-4 3v5h-2v-7z"/>
          <circle cx="761" cy="456" r="3.500"/><circle cx="761" cy="594" r="3.500"/><circle cx="925" cy="466" r="3.500"/><circle cx="937" cy="466" r="3.500"/><circle cx="925" cy="584" r="3.500"/><circle cx="937" cy="584" r="3.500"/>
        </g>
        <text class="dim" x="1363" y="295">66 mm</text>
        <text class="dim" x="978" y="349">0.6 mm</text>
        <text class="dim" transform="translate(714 450) rotate(-90)">0.5 mm</text>
        <text class="dim" transform="translate(584 544) rotate(-90)">7 mm</text>
        <text class="dim" transform="translate(887 549) rotate(-90)">6 mm</text>
      </g>
    </svg>
    <svg class="cube" viewBox="1733 91 100 170">
      <g fill="#e3e9ee">
        <path d="M1779 131l1-14 3 3q12-11 28-15l1 5q-15 3-26 14l3 4z"/>
        <path d="M1759 174l8-8v16zM1825 108l9-8v8zM1825 240h9v8z"/>
        <path d="M1796 150q0-13 13-13h30v74h-26q-17-2-17-16z"/>
      </g>
      <path d="M1804 148h35v56h-35z" fill="#f8fafc"/>
      <path d="M1800 142l9-4 1 7-6 8zM1798 202l6-5 6 7v7z" fill="#fff"/>
      <path d="M1808 159v32M1817 152h20M1817 202h20" stroke="#c8cad6" stroke-width="2"/>
      <path d="M1803 145l5 5" stroke="#33335a" stroke-width="2"/>
      <path d="M1807 200l-9 9M1794 212h4l-4 7h5" stroke="#00f" fill="none"/>
      <text x="1818" y="180">To</text>
    </svg>
    <a class="credit" href="#">https://blog.csdn.net/littlezhuhui</a>
  </div>
</main>
</body>
</html>
